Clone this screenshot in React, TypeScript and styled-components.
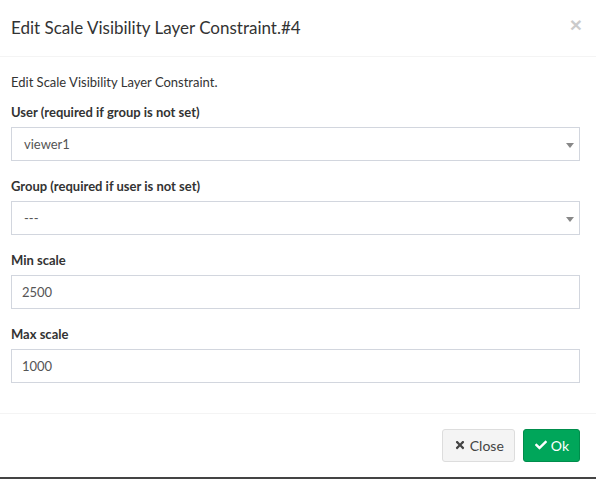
import styled, { createGlobalStyle } from "styled-components";
import { FaTimes, FaCheck } from "react-icons/fa";

const GlobalStyle = createGlobalStyle`
  html, body {
    margin: 0;
    padding: 0;
    background: #444;
  }
  body {
    font-family: Lato, "Liberation Sans", sans-serif;
    font-size: 13px;
    line-height: 20px;
    color: #333;
  }
  * {
    box-sizing: border-box;
  }
`;

const Modal = styled.div`
  width: 596px;
  background: #fff;
`;

const Header = styled.div`
  display: flex;
  align-items: center;
  justify-content: space-between;
  padding: 15px 14px 15px 11px;
  border-bottom: 1px solid #f4f4f4;
`;

const Title = styled.h4`
  margin: 0;
  font-size: 17px;
  font-weight: 400;
  line-height: 25.7px;
  color: #333;
`;

const CloseX = styled.button`
  border: 0;
  background: transparent;
  padding: 0;
  margin-top: -6px;
  font-family: "Liberation Sans", sans-serif;
  font-size: 21px;
  font-weight: 700;
  line-height: 1;
  color: #000;
  opacity: 0.2;
  cursor: pointer;
`;

const Body = styled.div`
  padding: 15px 16px 15px 11px;
`;

const Intro = styled.p`
  margin: 0 0 10px;
`;

const FormGroup = styled.div`
  margin-bottom: 15px;
`;

const Label = styled.label`
  display: block;
  margin-bottom: 5px;
  font-weight: 700;
`;

const SelectBox = styled.div`
  position: relative;
  display: flex;
  align-items: center;
  height: 34px;
  padding: 0 12px;
  border: 1px solid #d2d6de;
  color: #555;
`;

const Arrow = styled.span`
  position: absolute;
  right: 5px;
  top: 15px;
  width: 0;
  height: 0;
  border-left: 4px solid transparent;
  border-right: 4px solid transparent;
  border-top: 5px solid #888;
`;

const Input = styled.input`
  display: block;
  width: 100%;
  height: 34px;
  padding: 6px 10px;
  border: 1px solid #d2d6de;
  border-radius: 0;
  font-family: inherit;
  font-size: 13px;
  color: #555;
  outline: none;
`;

const Footer = styled.div`
  display: flex;
  justify-content: flex-end;
  gap: 8px;
  padding: 15px 16px 15px 11px;
  border-top: 1px solid #f4f4f4;
`;

const Button = styled.button<{ $variant: "default" | "success" }>`
  display: inline-flex;
  align-items: center;
  gap: 4px;
  height: 33px;
  padding: 0 10px 0 11px;
  border-radius: 3px;
  font-family: inherit;
  font-size: 14px;
  cursor: pointer;
  border: 1px solid ${(p) => (p.$variant === "success" ? "#008d4c" : "#ddd")};
  background: ${(p) => (p.$variant === "success" ? "#00a65a" : "#f4f4f4")};
  color: ${(p) => (p.$variant === "success" ? "#fff" : "#444")};

  svg {
    font-size: 12px;
  }
`;

function Select({ value }: { value: string }) {
  return (
    <SelectBox>
      {value}
      <Arrow />
    </SelectBox>
  );
}

function App() {
  return (
    <>
      <GlobalStyle />
      <Modal>
        <Header>
          <Title>Edit Scale Visibility Layer Constraint.#4</Title>
          <CloseX>×</CloseX>
        </Header>
        <Body>
          <Intro>Edit Scale Visibility Layer Constraint.</Intro>
          <FormGroup>
            <Label>User (required if group is not set)</Label>
            <Select value="viewer1" />
          </FormGroup>
          <FormGroup>
            <Label>Group (required if user is not set)</Label>
            <Select value="---" />
          </FormGroup>
          <FormGroup>
            <Label>Min scale</Label>
            <Input defaultValue="2500" />
          </FormGroup>
          <FormGroup>
            <Label>Max scale</Label>
            <Input defaultValue="1000" />
          </FormGroup>
        </Body>
        <Footer>
          <Button $variant="default">
            <FaTimes /> Close
          </Button>
          <Button $variant="success">
            <FaCheck /> Ok
          </Button>
        </Footer>
      </Modal>
    </>
  );
}

export default App;
